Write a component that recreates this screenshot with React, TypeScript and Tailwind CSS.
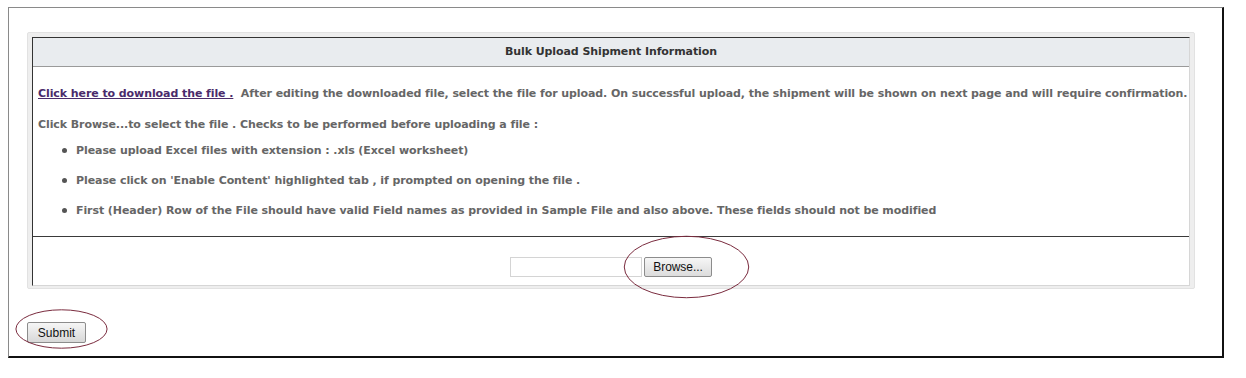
const bodyFont = { fontFamily: '"DejaVu Sans", Verdana, sans-serif', letterSpacing: '-0.08px' };

const bullets = [
  'Please upload Excel files with extension : .xls (Excel worksheet)',
  "Please click on 'Enable Content' highlighted tab , if prompted on opening the file .",
  'First (Header) Row of the File should have valid Field names as provided in Sample File and also above. These fields should not be modified',
];

function Ellipse({ className }: { className: string }) {
  return (
    <svg className={`pointer-events-none absolute ${className}`} viewBox="0 0 100 100" preserveAspectRatio="none">
      <ellipse cx="50" cy="50" rx="49" ry="48" fill="none" stroke="#7a2b3e" strokeWidth="1" vectorEffect="non-scaling-stroke" />
    </svg>
  );
}

export default function App() {
  return (
    <div className="relative h-[378px] w-[1246px] overflow-hidden bg-white pl-[8px] pt-[7px]">
      {/* outer frame */}
      <div className="h-[351px] w-[1216px] border-t border-l border-r-2 border-b-2 border-t-[#8a8a8a] border-l-[#8a8a8a] border-r-[#111] border-b-[#111] pl-[18px] pt-[24px]">
        {/* panel */}
        <div className="w-[1168px] rounded-[2px] border border-[#e2e2e2] bg-[#eeeeee] pl-[4px] pr-[4px] pt-[4px] pb-[2px]">
          <div className="border-t border-l border-t-[#333] border-l-[#333] border-r border-b border-r-[#d6d6d6] border-b-[#d6d6d6] bg-white" style={bodyFont}>
            <div className="flex h-[29px] items-center justify-center border-b border-[#9a9a9a] bg-[#e9ecef] text-[11px] font-bold text-[#333]">
              Bulk Upload Shipment Information
            </div>
            <div className="h-[170px] border-b border-[#3a3a3a] pl-[5px] pt-[20px] text-[11px] font-bold text-[#666]">
              <p className="leading-[14px]">
                <a href="#" className="text-[#4a2b6b] underline">Click here to download the file .</a>
                <span>&nbsp; After editing the downloaded file, select the file for upload. On successful upload, the shipment will be shown on next page and will require confirmation.</span>
              </p>
              <p className="mt-[17px] leading-[14px]">Click Browse...to select the file . Checks to be performed before uploading a file :</p>
              <ul className="mt-[12px] flex flex-col gap-[16px] pl-[38px]">
                {bullets.map((b) => (
                  <li key={b} className="relative leading-[14px]">
                    <span className="absolute left-[-14px] top-[4px] h-[5px] w-[5px] rounded-full bg-[#555]" />
                    {b}
                  </li>
                ))}
              </ul>
            </div>
            <div className="flex h-[48px] items-start justify-center gap-[2px] pt-[20px]">
              <div className="h-[20px] w-[132px] border border-[#d4d4d4] bg-white" />
              <button
                className="h-[20px] w-[68px] rounded-[2px] border border-[#8c8c8c] bg-gradient-to-b from-[#f6f6f6] to-[#dcdcdc] text-[12px] text-[#111]"
                style={{ fontFamily: '"Liberation Sans", Arial, sans-serif' }}
              >
                Browse...
              </button>
            </div>
          </div>
        </div>
        <button
          className="mt-[33px] h-[21px] w-[59px] rounded-[2px] border border-[#8c8c8c] bg-gradient-to-b from-[#f6f6f6] to-[#d8d8d8] text-[12px] text-[#111]"
          style={{ fontFamily: '"Liberation Sans", Arial, sans-serif' }}
        >
          Submit
        </button>
      </div>
      <Ellipse className="left-[623px] top-[235px] h-[64px] w-[127px]" />
      <Ellipse className="left-[15px] top-[309px] h-[40px] w-[93px]" />
    </div>
  );
}
